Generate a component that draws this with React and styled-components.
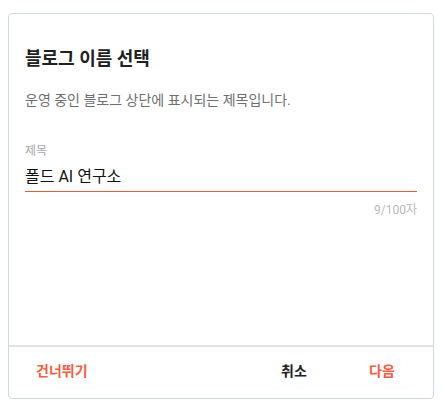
import React from "react";
import styled, { createGlobalStyle } from "styled-components";

const Global = createGlobalStyle`
  html, body { margin: 0; padding: 0; background: #fff; }
  body {
    padding: 13px 8px 10px;
    font-family: Roboto, "Noto Sans CJK KR", "Noto Sans", sans-serif;
    -webkit-font-smoothing: antialiased;
  }
  * { box-sizing: border-box; }
`;

const Card = styled.div`
  width: 426px;
  height: 386px;
  border: 1px solid #cfd8dc;
  border-radius: 4px;
  background: #fff;
  display: flex;
  flex-direction: column;
`;

const Body = styled.div`
  flex: 1;
  padding: 33px 16px 0;
  display: flex;
  flex-direction: column;
`;

const Title = styled.h2`
  margin: 0;
  font-size: 18px;
  line-height: 24px;
  font-weight: 700;
  color: #212121;
`;

const Description = styled.p`
  margin: 19px 0 0;
  font-size: 14px;
  line-height: 20px;
  color: #6f6f6f;
`;

const Field = styled.div`
  margin-top: 33px;
  display: flex;
  flex-direction: column;
`;

const Label = styled.label`
  font-size: 12px;
  line-height: 16px;
  color: #a6a6a6;
`;

const Input = styled.div`
  margin-top: 6px;
  font-size: 16px;
  line-height: 24px;
  color: #111;
  padding-bottom: 2px;
  border-bottom: 1px solid #f05a2e;
`;

const Counter = styled.div`
  margin-top: 10px;
  align-self: flex-end;
  font-size: 12px;
  line-height: 16px;
  color: #b9b9b9;
`;

const Footer = styled.div`
  height: 53px;
  border-top: 2px solid #e2e2e2;
  display: flex;
  align-items: center;
  padding: 0 19px 5px 16px;
  gap: 24px;
`;

const Button = styled.button`
  min-width: 64px;
  height: 36px;
  padding: 0 11px;
  border: none;
  background: transparent;
  font-family: inherit;
  font-size: 14px;
  font-weight: 700;
  color: ${(p) => (p.$accent ? "#fc5b3f" : "#212121")};
  margin-left: ${(p) => (p.$push ? "auto" : "0")};
  cursor: pointer;
`;

export default function App() {
  return (
    <>
      <Global />
      <Card>
        <Body>
          <Title>블로그 이름 선택</Title>
          <Description>운영 중인 블로그 상단에 표시되는 제목입니다.</Description>
          <Field>
            <Label>제목</Label>
            <Input>폴드 AI 연구소</Input>
            <Counter>9/100자</Counter>
          </Field>
        </Body>
        <Footer>
          <Button $accent>건너뛰기</Button>
          <Button $push>취소</Button>
          <Button $accent>다음</Button>
        </Footer>
      </Card>
    </>
  );
}
